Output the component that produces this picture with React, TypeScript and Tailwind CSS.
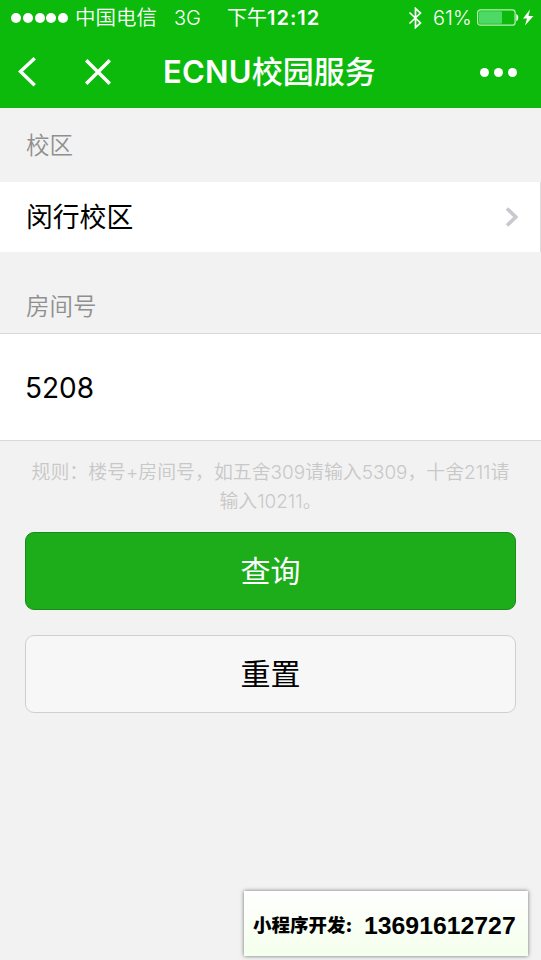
import type { ReactNode } from 'react'

const HINT_LINES = ['规则：楼号+房间号，如五舍309请输入5309，十舍211请', '输入10211。']

function StatusBar() {
  return (
    <div className="flex h-9 items-center whitespace-nowrap pl-[11px] text-[20px] leading-9">
      <div className="flex w-[64px] shrink-0 gap-[1.8px]">
        {[0, 1, 2, 3, 4].map((n) => (
          <span key={n} className="size-[10px] rounded-full bg-white" />
        ))}
      </div>
      <span className="w-[99px] shrink-0 text-[20.5px] font-[350]">中国电信</span>
      <span className="w-[53px] shrink-0 text-[20px] font-light">3G</span>
      <span className="w-[181px] shrink-0">
        下午<span className="font-semibold tracking-[1px]">12:12</span>
      </span>
      <svg viewBox="0 0 14 22" className="h-[22px] w-[14px] shrink-0" fill="none" stroke="currentColor" strokeWidth="1.700">
        <path d="M1.500 5.500l11 10.500-5 4.500v-19l5 4.500-11 10.500" />
      </svg>
      <span className="ml-[11px] w-[44px] shrink-0 text-[20px] font-light">61%</span>
      <svg viewBox="0 0 58 20" className="h-5 w-[58px] shrink-0" fill="none">
        <rect x="0.600" y="1.800" width="37.500" height="15.400" rx="2.800" stroke="#b9efb7" strokeWidth="1.200" />
        <rect x="2" y="3.200" width="23" height="12.600" rx="1.200" fill="#4cd964" />
        <path d="M39.300 6c2.600 1 2.600 6.200 0 7.200z" fill="#fff" />
        <path d="M53 1.500L46 10.500h4l-2 7 8.500-9.500h-5z" fill="#fff" />
      </svg>
    </div>
  )
}

function NavBar() {
  return (
    <div className="flex h-[72px] items-center whitespace-nowrap pl-[18px]">
      <svg viewBox="0 0 18 30" className="h-[30px] w-[18px]" fill="none" stroke="currentColor" strokeWidth="3.400">
        <path d="M16.700 1.200L2.500 14.500l14.200 13.800" />
      </svg>
      <svg viewBox="0 0 26 26" className="ml-[49px] size-[26px]" fill="none" stroke="currentColor" strokeWidth="3.400">
        <path d="M1.200 1.200l23.600 23.600M24.800 1.200L1.200 24.800" />
      </svg>
      <h1 className="ml-[52px] w-[317px] text-[31px] font-medium leading-[72px]">
        <span className="font-semibold tracking-[0.2px]">ECNU</span>校园服务
      </h1>
      <div className="flex gap-[5px]">
        {[0, 1, 2].map((n) => (
          <span key={n} className="size-[9px] rounded-full bg-white" />
        ))}
      </div>
    </div>
  )
}

function Label({ children }: { children: ReactNode }) {
  return <div className="pl-[26px] text-[23.500px] font-[350] leading-[34px] text-[#8f8f8f]">{children}</div>
}

export default function App() {
  return (
    <div className="relative h-[960px] w-[541px] overflow-hidden bg-[#f2f2f2] font-['Inter','Noto_Sans_CJK_SC',sans-serif] text-black">
      <header className="bg-[#0bba0a] text-white">
        <StatusBar />
        <NavBar />
      </header>

      <main>
        <div className="h-[74px] pt-[21px]">
          <Label>校区</Label>
        </div>
        <div className="flex h-[70px] items-center justify-between border-r border-[#dcdcdc] bg-white pl-[26px] pr-[21px]">
          <span className="text-[26.800px] leading-[70px]">闵行校区</span>
          <svg viewBox="0 0 14 20" className="h-5 w-[14px]" fill="none" stroke="#c8c8cd" strokeWidth="3.600">
            <path d="M2 1.500l8.800 8.500L2 18.500" />
          </svg>
        </div>
        <div className="h-[81px] pt-[38px]">
          <Label>房间号</Label>
        </div>
        <div className="h-[108px] border-y border-[#d9d9d9] bg-white pl-[25px] text-[28px] leading-[108px]">5208</div>

        <div className="whitespace-nowrap pt-[17px] text-center text-[18.900px] font-[350] leading-[29px] text-[#c8c8c8]">
          {HINT_LINES.map((line) => (
            <p key={line}>{line}</p>
          ))}
        </div>

        <div className="flex flex-col gap-[25px] px-[25px] pt-[16px]">
          <button className="h-[78px] rounded-[9px] border border-[#178c17] bg-[#1dad1b] text-[30px] text-white">查询</button>
          <button className="h-[78px] rounded-[9px] border border-[#cfcfcf] bg-[#f7f7f7] text-[30px]">重置</button>
        </div>
      </main>

      {/* floats over the bottom corner of the form */}
      <div className="absolute bottom-[4px] right-[13px] flex h-[65px] w-[284px] items-center whitespace-nowrap bg-linear-to-b from-white to-[#f4ffec] pl-[9px] pt-[5px] shadow-[0_0_4px_rgba(0,0,0,0.550)]">
        <span className="w-[111px] text-[18.500px] font-black">小程序开发:</span>
        <span className="font-['Liberation_Sans',sans-serif] text-[24.800px] font-bold">13691612727</span>
      </div>
    </div>
  )
}
